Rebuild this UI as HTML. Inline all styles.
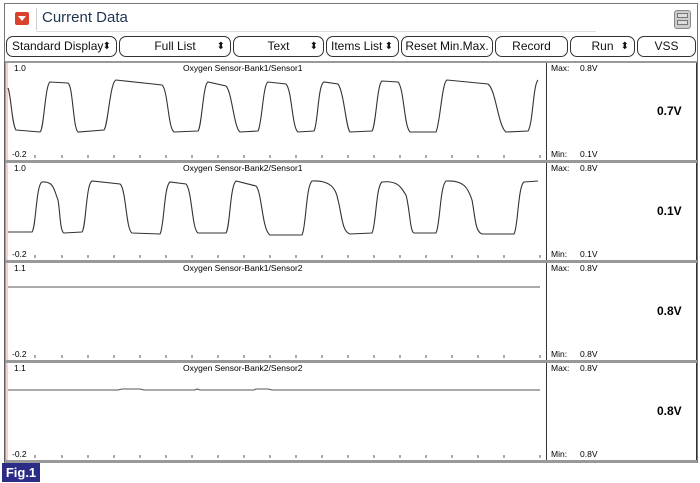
<!DOCTYPE html><html><head><style>
body{margin:0;width:700px;height:483px;background:#fff;overflow:hidden;font-family:"Liberation Sans",sans-serif;position:relative}
.frame{position:absolute;left:4px;top:3px;width:692px;height:459px;border:1px solid #777;border-bottom:none}
.title{position:absolute;left:42px;top:9px;font-size:15px;color:#1f3550}
.ico{position:absolute;left:15px;top:12px;width:14px;height:13px;background:#d9432e;border-radius:2px}
.ico:after{content:"";position:absolute;left:3px;top:4px;border-left:4px solid transparent;border-right:4px solid transparent;border-top:5px solid #fff}
.sep{position:absolute;left:36px;top:8px;width:1px;height:22px;background:#ccc}
.hl{position:absolute;left:36px;top:31px;width:560px;height:1px;background:#ddd}
.menu{position:absolute;left:674px;top:10px;width:15px;height:17px;border:1px solid #888;border-radius:3px;background:#ccc}
.menu:before,.menu:after{content:"";position:absolute;left:2px;width:11px;height:5px;border:1px solid #777;background:#ddd;box-sizing:border-box}
.menu:before{top:2px}.menu:after{top:9px}
.b{position:absolute;top:36px;height:21px;border:1px solid #333;border-radius:7px;box-sizing:border-box;font-size:12px;line-height:19px;text-align:center;color:#111}
.b span{position:absolute;right:5px;font-size:10px}
.fig{position:absolute;left:2px;top:463px;width:38px;height:19px;background:#2b2c86;color:#fff;font-weight:bold;font-size:13px;line-height:19px;text-align:center}
</style></head><body>
<div class="frame"></div>
<div class="ico"></div><div class="sep"></div><div class="title">Current Data</div><div class="hl"></div><div class="menu"></div>
<div class="b" style="left:6px;width:111px;text-align:left;padding-left:5px">Standard Display<span>⬍</span></div>
<div class="b" style="left:119px;width:112px">Full List<span>⬍</span></div>
<div class="b" style="left:233px;width:91px">Text<span>⬍</span></div>
<div class="b" style="left:326px;width:73px;text-align:left;padding-left:4px">Items List<span>⬍</span></div>
<div class="b" style="left:401px;width:92px">Reset Min.Max.</div>
<div class="b" style="left:495px;width:73px">Record</div>
<div class="b" style="left:570px;width:65px">Run<span>⬍</span></div>
<div class="b" style="left:637px;width:59px">VSS</div>
<svg style="position:absolute;left:0;top:0" width="700" height="483" font-family="Liberation Sans" font-size="8.5">
<line x1="5" y1="62" x2="5" y2="462" stroke="#444"/>
<line x1="7" y1="63" x2="7" y2="462" stroke="#e8a0a0"/>
<line x1="546.5" y1="62" x2="546.5" y2="462" stroke="#333"/>
<line x1="696.5" y1="62" x2="696.5" y2="462" stroke="#333"/>
<g fill="#999"><rect x="5" y="61" width="692" height="2"/><rect x="5" y="160" width="692" height="3"/><rect x="5" y="260" width="692" height="3"/><rect x="5" y="360" width="692" height="3"/><rect x="5" y="460" width="692" height="3"/></g>
<g fill="#000">
<text x="14" y="71">1.0</text><text x="183" y="71">Oxygen Sensor-Bank1/Sensor1</text><text x="12" y="157">-0.2</text>
<text x="14" y="171">1.0</text><text x="183" y="171">Oxygen Sensor-Bank2/Sensor1</text><text x="12" y="257">-0.2</text>
<text x="14" y="271">1.1</text><text x="183" y="271">Oxygen Sensor-Bank1/Sensor2</text><text x="12" y="357">-0.2</text>
<text x="14" y="371">1.1</text><text x="183" y="371">Oxygen Sensor-Bank2/Sensor2</text><text x="12" y="457">-0.2</text>
<text x="551" y="71">Max:</text><text x="580" y="71">0.8V</text><text x="551" y="157">Min:</text><text x="580" y="157">0.1V</text>
<text x="551" y="171">Max:</text><text x="580" y="171">0.8V</text><text x="551" y="257">Min:</text><text x="580" y="257">0.1V</text>
<text x="551" y="271">Max:</text><text x="580" y="271">0.8V</text><text x="551" y="357">Min:</text><text x="580" y="357">0.8V</text>
<text x="551" y="371">Max:</text><text x="580" y="371">0.8V</text><text x="551" y="457">Min:</text><text x="580" y="457">0.8V</text>
<g font-size="12" font-weight="bold"><text x="657" y="115">0.7V</text><text x="657" y="215">0.1V</text><text x="657" y="315">0.8V</text><text x="657" y="415">0.8V</text></g>
</g>
<g stroke="#333" stroke-width="1.1" fill="none">
<path d="M8 88 C11 95,12 125,16 130 L40 132 C44 130,45 85,50 82 L68 83 C73 86,73 128,78 132 L104 130 C108 126,110 82,116 80 L162 85 C168 90,168 128,174 132 L198 131 C202 126,203 84,208 82 L226 86 C232 92,234 128,240 132 L258 131 C262 124,263 84,268 82 L286 84 C292 90,292 128,298 132 L314 131 C318 124,318 84,324 82 L338 84 C344 92,346 128,350 132 L372 131 C376 126,377 84,382 81 L398 82 C404 88,404 126,410 132 L436 132 C440 124,442 82,447 80 L488 84 C496 90,498 126,506 132 L528 131 C533 124,533 85,538 80"/>
<path d="M8 232 L32 232 C36 228,36 185,42 182 C54 181,54 190,58 200 C60 210,60 232,64 233 L82 232 C86 228,86 184,92 181 L120 184 C126 188,126 230,132 233 L160 234 C164 228,164 186,170 182 L186 184 C192 190,192 230,198 233 L226 233 C230 228,230 186,236 181 L256 186 C262 192,262 230,270 235 L302 235 C306 228,306 186,312 181 C330 180,336 188,338 200 C342 215,342 232,350 234 L372 233 C376 226,376 186,382 182 C400 180,402 190,406 195 C410 210,410 232,414 233 L436 233 C440 226,440 186,446 181 C464 180,468 188,472 200 C475 215,475 232,482 234 L514 234 C518 228,518 186,524 182 L538 181"/>
<path d="M8 287 L540 287" stroke="#555"/>
<path d="M8 390 L118 390 L122 389 L140 389 L144 390 L195 390 L197 389 L200 390 L254 390 L256 389 L268 389 L272 390 L540 390" stroke="#555"/>
</g>
<g stroke="#555">
<path d="M35 155v3M62 155v3M88 155v3M114 155v3M140 155v3M166 155v3M192 155v3M218 155v3M244 155v3M270 155v3M296 155v3M322 155v3M348 155v3M374 155v3M400 155v3M426 155v3M452 155v3M478 155v3M504 155v3M540 155v3"/>
<path d="M35 255v3M62 255v3M88 255v3M114 255v3M140 255v3M166 255v3M192 255v3M218 255v3M244 255v3M270 255v3M296 255v3M322 255v3M348 255v3M374 255v3M400 255v3M426 255v3M452 255v3M478 255v3M504 255v3M540 255v3"/>
<path d="M35 355v3M62 355v3M88 355v3M114 355v3M140 355v3M166 355v3M192 355v3M218 355v3M244 355v3M270 355v3M296 355v3M322 355v3M348 355v3M374 355v3M400 355v3M426 355v3M452 355v3M478 355v3M504 355v3M540 355v3"/>
<path d="M35 455v3M62 455v3M88 455v3M114 455v3M140 455v3M166 455v3M192 455v3M218 455v3M244 455v3M270 455v3M296 455v3M322 455v3M348 455v3M374 455v3M400 455v3M426 455v3M452 455v3M478 455v3M504 455v3M540 455v3"/>
</g>
</svg>
<div class="fig">Fig.1</div>
</body></html>
